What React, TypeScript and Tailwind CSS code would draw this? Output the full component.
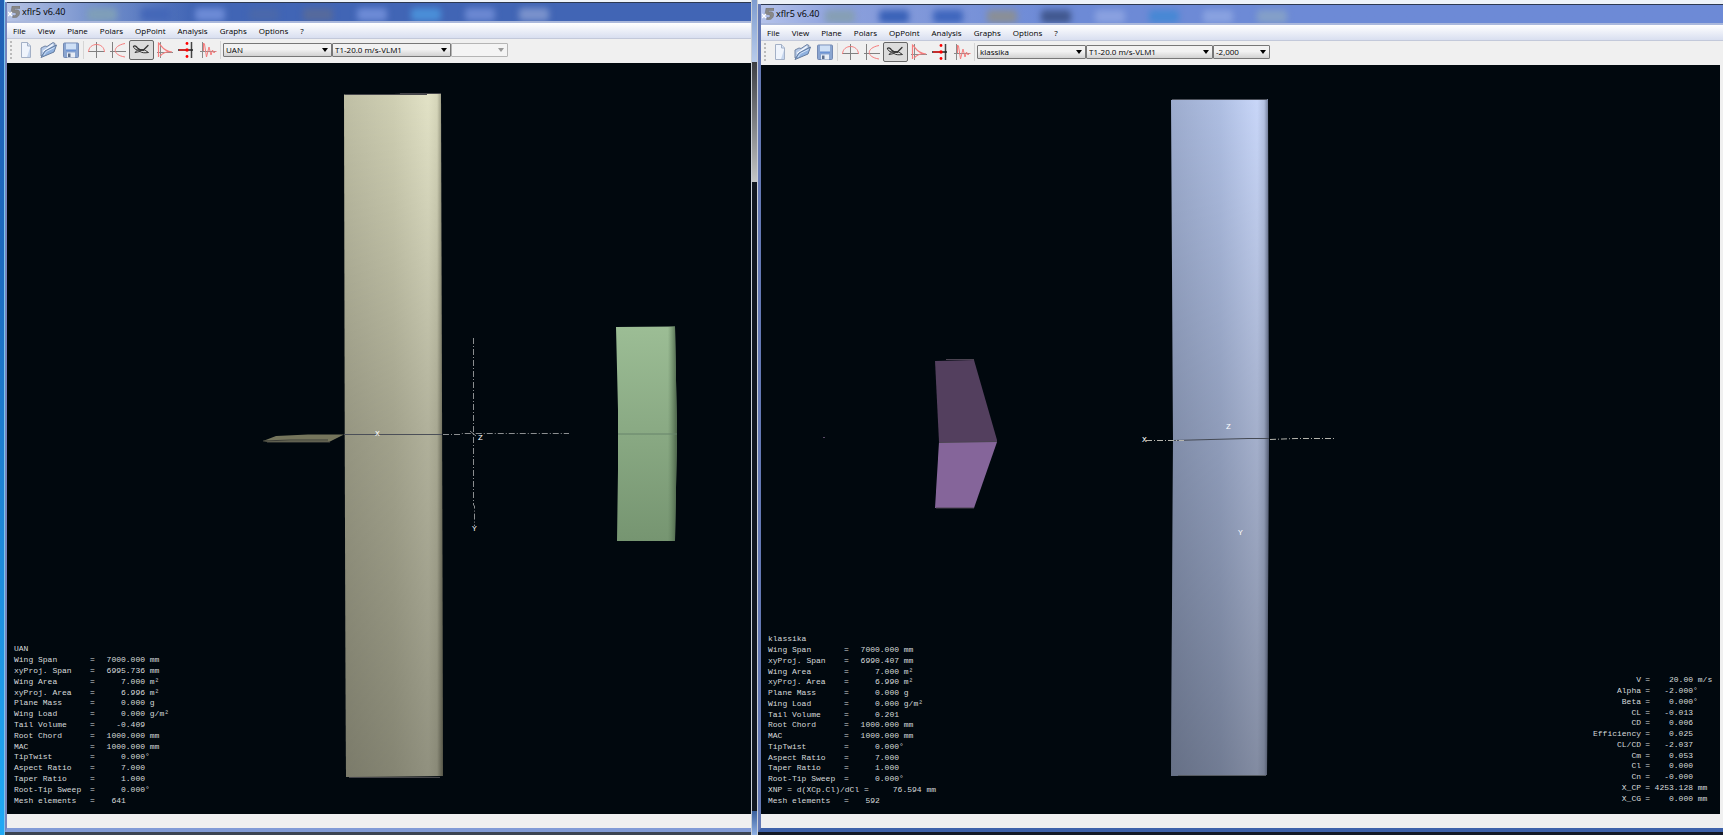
import { ReactNode } from "react";

type Row = { label: string; value?: string; unit?: string; wide?: boolean };

interface XflrWindowProps {
  id: string;
  plane: string;
  polar: string;
  opPoint: string;
  glass: string[];
  light?: boolean;
  children: ReactNode;
}

const MENUS = ["File", "View", "Plane", "Polars", "OpPoint", "Analysis", "Graphs", "Options", "?"];

// Desktop icons that shine through the glass title bars
const DARK_GLASS = ["bg-[#7f9fb8]", "bg-[#4467b8]", "bg-[#6d8bd6]", "bg-[#4a68ab]", "bg-[#566a9c]", "bg-[#6d8bd6]", "bg-[#4a8fd8]", "bg-[#6b88d2]", "bg-[#7a92cc]"];
const LIGHT_GLASS = ["bg-[#869fb4]", "bg-[#3a62b8]", "bg-[#3f66bd]", "bg-[#8a8f96]", "bg-[#41588f]", "bg-[#8aa1e0]", "bg-[#4788d4]", "bg-[#89a2e0]", "bg-[#84a0c8]"];

const UAN_ROWS: Row[] = [
  { label: "Wing Span", value: "7000.000", unit: " mm" },
  { label: "xyProj. Span", value: "6995.736", unit: " mm" },
  { label: "Wing Area", value: "7.000", unit: " m²" },
  { label: "xyProj. Area", value: "6.996", unit: " m²" },
  { label: "Plane Mass", value: "0.000", unit: " g" },
  { label: "Wing Load", value: "0.000", unit: " g/m²" },
  { label: "Tail Volume", value: "-0.409" },
  { label: "Root Chord", value: "1000.000", unit: " mm" },
  { label: "MAC", value: "1000.000", unit: " mm" },
  { label: "TipTwist", value: "0.000", unit: "°" },
  { label: "Aspect Ratio", value: "7.000" },
  { label: "Taper Ratio", value: "1.000" },
  { label: "Root-Tip Sweep", value: "0.000", unit: "°" },
  { label: "Mesh elements", value: "641    " },
];

const KLASSIKA_ROWS: Row[] = [
  { label: "Wing Span", value: "7000.000", unit: " mm" },
  { label: "xyProj. Span", value: "6990.407", unit: " mm" },
  { label: "Wing Area", value: "7.000", unit: " m²" },
  { label: "xyProj. Area", value: "6.990", unit: " m²" },
  { label: "Plane Mass", value: "0.000", unit: " g" },
  { label: "Wing Load", value: "0.000", unit: " g/m²" },
  { label: "Tail Volume", value: "0.201" },
  { label: "Root Chord", value: "1000.000", unit: " mm" },
  { label: "MAC", value: "1000.000", unit: " mm" },
  { label: "TipTwist", value: "0.000", unit: "°" },
  { label: "Aspect Ratio", value: "7.000" },
  { label: "Taper Ratio", value: "1.000" },
  { label: "Root-Tip Sweep", value: "0.000", unit: "°" },
  { label: "XNP = d(XCp.Cl)/dCl =     76.594 mm", wide: true },
  { label: "Mesh elements", value: "592    " },
];

const RESULT_ROWS: Row[] = [
  { label: "V", value: "20.00", unit: " m/s" },
  { label: "Alpha", value: "-2.000", unit: "°" },
  { label: "Beta", value: "0.000", unit: "°" },
  { label: "CL", value: "-0.013" },
  { label: "CD", value: "0.006" },
  { label: "Efficiency", value: "0.025" },
  { label: "CL/CD", value: "-2.037" },
  { label: "Cm", value: "0.053" },
  { label: "Cl", value: "0.000" },
  { label: "Cn", value: "-0.000" },
  { label: "X_CP", value: "4253.128", unit: " mm" },
  { label: "X_CG", value: "0.000", unit: " mm" },
];

// --- TOOLBAR ICONS ---
function NewIcon() {
  return (
    <svg viewBox="0 0 18 18" className="size-[18px]">
      <path d="M4.500 1.500h6l3 3.500v11.500h-9z" fill="#eff4fc" stroke="#a3b0c6" />
      <path d="M10.500 1.500v3.500h3" fill="#d5e2f5" stroke="#a3b0c6" />
      <path d="M10 16h3V7z" fill="#c6d6ee" />
    </svg>
  );
}

function OpenIcon() {
  return (
    <svg viewBox="0 0 18 18" className="size-[18px]">
      <path d="M1 15V7l4-2 2 .5 6-4 2 1v4z" fill="#b4c8e6" stroke="#7386a5" />
      <path d="M3 10.500l10-7" stroke="#f5f9ff" strokeWidth="1.500" />
      <path d="M1 16.500l4-6.500 11.500-6-2.500 7z" fill="#8fb1de" stroke="#647c9f" />
      <path d="M4 14l2.500-3.500 8-4" fill="none" stroke="#cfe0f6" />
    </svg>
  );
}

function SaveIcon() {
  return (
    <svg viewBox="0 0 18 18" className="size-[18px]">
      <rect x=".5" y="2" width="15" height="14.500" rx="1" fill="#8aa5d0" stroke="#748ab3" />
      <rect x="3" y="2.500" width="10" height="6" fill="#cfe0f6" />
      <path d="M3 9.500h10" stroke="#6b93d4" strokeWidth="1.500" />
      <rect x="4" y="11.500" width="8" height="5" fill="#e8edf5" />
      <rect x="5" y="12.500" width="2.500" height="3.500" fill="#5d6f8d" />
    </svg>
  );
}

function FoilIcon() {
  return (
    <svg viewBox="0 0 18 18" className="size-[18px]" fill="none">
      <path d="M9.500 1v16M1 10.500h16" stroke="#808080" />
      <path d="M1.500 11C2 1 17 1 17.500 11" stroke="#f57c7c" />
    </svg>
  );
}

function PolarIcon() {
  return (
    <svg viewBox="0 0 18 18" className="size-[18px]" fill="none">
      <path d="M3.500 1v16M1 10.500h16" stroke="#808080" />
      <path d="M16 2.500C3 5 3 14 16 16" stroke="#f57c7c" />
    </svg>
  );
}

function PlaneIcon() {
  return (
    <svg viewBox="0 0 18 18" className="size-[18px]" fill="none" stroke="#333" strokeLinecap="round">
      <path d="M1.500 5.500c1-1.500 3 0 4 1.500l3 2h3l4.500-4.500" strokeWidth="1.300" />
      <path d="M1.500 5.500c0 2 2 3 4 3.500l-2.500 2.500 5-1c2 1.500 5 1.500 8.500 1l-3-2" />
      <path d="M6 9h6" strokeWidth="1.500" />
    </svg>
  );
}

function OpPointIcon() {
  return (
    <svg viewBox="0 0 18 18" className="size-[18px]" fill="none">
      <path d="M4.500 1v16M1 11.500h16" stroke="#8a8a8a" />
      <path d="M2.500 16V2c3 2 4 8 13.500 9-5-1-8 0-12 4" stroke="#f57c7c" strokeWidth="1.200" />
    </svg>
  );
}

function RootLocusIcon() {
  return (
    <svg viewBox="0 0 18 18" className="size-[18px]" fill="none">
      <path d="M13.500 1v16" stroke="#444" strokeWidth="1.500" />
      <path d="M0 9h15" stroke="#222" strokeWidth="1.500" />
      <path d="M1 9h7" stroke="#e82020" strokeWidth="1.500" />
      <circle cx="9" cy="2.500" r="1.400" fill="#f00" />
      <circle cx="9" cy="9" r="1.700" fill="#f00" />
      <circle cx="9" cy="15.500" r="1.400" fill="#f00" />
    </svg>
  );
}

function ResponseIcon() {
  return (
    <svg viewBox="0 0 18 18" className="size-[18px]" fill="none">
      <path d="M2.500 1v16M0 10.500h16" stroke="#8a8a8a" />
      <path d="M3.500 10V2l1 1 2 13 2.500-10 2 8 1.500-5 1.500 3 1.500-2 1 1" stroke="#f57c7c" />
    </svg>
  );
}

const FILE_TOOLS = [
  { name: "New project", icon: <NewIcon /> },
  { name: "Open project", icon: <OpenIcon /> },
  { name: "Save project", icon: <SaveIcon /> },
];

const VIEW_TOOLS = [
  { name: "Operating point view", icon: <FoilIcon /> },
  { name: "Polar view", icon: <PolarIcon /> },
  { name: "3D view", icon: <PlaneIcon />, active: true },
  { name: "Cp view", icon: <OpPointIcon /> },
  { name: "Root locus view", icon: <RootLocusIcon /> },
  { name: "Time response view", icon: <ResponseIcon /> },
];

function Combo({ id, label, value, size, disabled }: { id: string; label: string; value: string; size: string; disabled?: boolean }) {
  return (
    <div className={`relative h-[14px] ${size}`}>
      <select
        id={id}
        aria-label={label}
        defaultValue={value}
        disabled={disabled}
        className="block h-full w-full appearance-none rounded-[1px] border border-[#777] bg-linear-to-b from-[#f2f2f2] from-45% to-[#d2d2d2] pl-[2px] text-[8px] leading-[12px] text-black disabled:border-[#b5b5b5] disabled:from-[#f4f4f4] disabled:to-[#f4f4f4]"
      >
        <option>{value}</option>
      </select>
      <svg viewBox="0 0 6 4" className={`pointer-events-none absolute top-[5px] right-[4px] h-1 w-1.5 ${disabled ? "text-[#999]" : "text-black"}`}>
        <path d="M0 0h6L3 4z" fill="currentColor" />
      </svg>
    </div>
  );
}

function DataTable({ title, rows, className }: { title: string; rows: Row[]; className: string }) {
  return (
    <table className={`absolute bottom-2 left-[7px] w-[200px] table-fixed font-['Liberation_Mono',monospace] text-[8px] leading-[10px] whitespace-pre text-[#d6dadb] ${className}`}>
      <colgroup>
        <col className="w-[76px]" />
        <col className="w-[10px]" />
        <col className="w-[45px]" />
        <col />
      </colgroup>
      <tbody>
        <tr>
          <th colSpan={4} className="p-0 text-left font-normal">{title}</th>
        </tr>
        {rows.map((row) =>
          row.wide ? (
            <tr key={row.label}>
              <td colSpan={4} className="p-0">{row.label}</td>
            </tr>
          ) : (
            <tr key={row.label}>
              <th className="p-0 text-left font-normal">{row.label}</th>
              <td className="p-0">=</td>
              <td className="p-0 text-right">{row.value}</td>
              <td className="p-0">{row.unit}</td>
            </tr>
          )
        )}
      </tbody>
    </table>
  );
}

function ResultTable() {
  return (
    <table className="absolute right-[7px] bottom-[10px] h-[129px] w-[130px] table-fixed font-['Liberation_Mono',monospace] text-[8px] leading-[10px] whitespace-pre text-[#d6dadb]">
      <colgroup>
        <col className="w-[58px]" />
        <col className="w-[9px]" />
        <col className="w-[43px]" />
        <col />
      </colgroup>
      <tbody>
        {RESULT_ROWS.map((row) => (
          <tr key={row.label}>
            <th className="p-0 text-right font-normal">{row.label}</th>
            <td className="p-0 text-right">=</td>
            <td className="p-0 text-right">{row.value}</td>
            <td className="p-0">{row.unit}</td>
          </tr>
        ))}
      </tbody>
    </table>
  );
}

function UanScene() {
  return (
    <svg viewBox="7 63 744 751" className="absolute inset-0 h-full w-full" role="img" aria-label="UAN plane, top view">
      <defs>
        <linearGradient id="uanWing" x1="0" y1="0" x2="1" y2="0">
          <stop offset="0" stopColor="#bfbfa5" />
          <stop offset="0.500" stopColor="#cfcfb3" />
          <stop offset="0.850" stopColor="#e2e2c6" />
          <stop offset="0.940" stopColor="#d6d6ba" />
          <stop offset="1" stopColor="#85856f" />
        </linearGradient>
        <linearGradient id="uanShade" x1="0" y1="0" x2="0" y2="1">
          <stop offset="0" stopColor="#000" stopOpacity="0" />
          <stop offset="0.500" stopColor="#000" stopOpacity="0.220" />
          <stop offset="1" stopColor="#000" stopOpacity="0.360" />
        </linearGradient>
        <linearGradient id="uanElev" x1="0" y1="0" x2="0" y2="1">
          <stop offset="0" stopColor="#9cbd95" />
          <stop offset="1" stopColor="#769571" />
        </linearGradient>
        <linearGradient id="uanElevEdge" x1="0" y1="0" x2="1" y2="0">
          <stop offset="0.850" stopColor="#5f7d5c" stopOpacity="0" />
          <stop offset="1" stopColor="#4a6248" />
        </linearGradient>
      </defs>
      <path d="M344 94.500L441 93.500L442 400L443 776L346 777L345 530Z" fill="url(#uanWing)" />
      <path d="M344 94.500L441 93.500L442 400L443 776L346 777L345 530Z" fill="url(#uanShade)" />
      <path d="M345 94.500H427M400 93.500H441M349 777.500H440" stroke="#45454a" />
      <path d="M344 434.500H442" stroke="#4b4f58" />
      <path d="M263 441L276 436L308 434.500H344L331 441L329 442L268 442Z" fill="#75755c" />
      <path d="M263 441L290 440H328" stroke="#3d3e38" fill="none" />
      <path d="M267 442H330" stroke="#4e4f47" />
      <path d="M616 327L675 326.500L677 434L675 541H617L618 470V410Z" fill="url(#uanElev)" />
      <path d="M616 327L675 326.500L677 434L675 541H617L618 470V410Z" fill="url(#uanElevEdge)" />
      <path d="M618 434H677" stroke="#66836a" />
      <g stroke="#8b8e90" strokeDasharray="6 2 1 2" fill="none">
        <path d="M443 434.500H460L462 433.500H569" />
        <path d="M473.500 338V505L474.500 506V526" />
      </g>
      <path d="M470 431l6 5" stroke="#8b8e90" />
      <g fill="#fff" fontFamily="'Liberation Mono', monospace" fontSize="8">
        <text x="375" y="436">X</text>
        <text x="478" y="440">Z</text>
        <text x="472" y="531">Y</text>
      </g>
    </svg>
  );
}

function KlassikaScene() {
  return (
    <svg viewBox="761 65 959 749" className="absolute inset-0 h-full w-full" role="img" aria-label="klassika plane, top view">
      <defs>
        <linearGradient id="klsWing" x1="0" y1="0" x2="1" y2="0">
          <stop offset="0" stopColor="#9dacce" />
          <stop offset="0.500" stopColor="#aebee2" />
          <stop offset="0.880" stopColor="#c8d6f8" />
          <stop offset="0.950" stopColor="#b4c2e2" />
          <stop offset="1" stopColor="#66718c" />
        </linearGradient>
        <linearGradient id="klsShade" x1="0" y1="0" x2="0" y2="1">
          <stop offset="0" stopColor="#000" stopOpacity="0" />
          <stop offset="0.500" stopColor="#000" stopOpacity="0.180" />
          <stop offset="1" stopColor="#000" stopOpacity="0.350" />
        </linearGradient>
      </defs>
      <path d="M1171 100L1268 99L1269 440L1267 775L1171 776L1173 440Z" fill="url(#klsWing)" />
      <path d="M1171 100L1268 99L1269 440L1267 775L1171 776L1173 440Z" fill="url(#klsShade)" />
      <path d="M1172 99.500H1267" stroke="#4c505a" />
      <path d="M1178 775.500H1266" stroke="#555a60" />
      <path d="M935 361L974 360L997 440V442H939Z" fill="#533f5e" />
      <path d="M939 442H997L974 508H935Z" fill="#85659a" />
      <path d="M939 442.500L997 441.500M936 508H974M946 359.500H974" stroke="#4c4452" />
      <path d="M1173 440.500L1248 438.500H1269" stroke="#454a54" fill="none" />
      <g stroke="#b5b5ad" strokeDasharray="6 2 1 2" fill="none">
        <path d="M1146 440.500H1184" />
        <path d="M1270 439.500L1296 438.500H1335" />
      </g>
      <rect x="823" y="437" width="2" height="1" fill="#5b4a68" />
      <g fill="#fff" fontFamily="'Liberation Mono', monospace" fontSize="8">
        <text x="1142" y="442">X</text>
        <text x="1226" y="429">Z</text>
        <text x="1238" y="535">Y</text>
      </g>
    </svg>
  );
}

function XflrWindow({ id, plane, polar, opPoint, glass, light, children }: XflrWindowProps) {
  return (
    <div className="flex h-full min-w-0 flex-col">
      {/* Title bar */}
      <header
        className={`flex h-[21px] shrink-0 items-center gap-[2px] overflow-hidden border-t border-b-2 border-t-[#2c3850] border-b-[#aab8dc] pl-px ${
          light
            ? "bg-linear-to-r from-[#b4c2ea] via-[#8ca0dc] via-8% to-[#6d8ad6] to-30%"
            : "bg-linear-to-r from-[#b6c3e4] via-[#7e98d0] via-10% to-[#4165b5] to-25%"
        }`}
      >
        <svg viewBox="0 0 12 12" className="size-3 shrink-0">
          <path d="M4 0h8v2.500H6.500v1.500c4-1 6 1 5 4-.8 3-4 4.500-7 3.500l.5-2c4 1 4.500-3.500 0-3H3z" fill="#888" stroke="#666" strokeWidth="0.400" />
          <path d="M0 6l4 4M4 6l-4 4" stroke="#fff" strokeWidth="1.300" />
        </svg>
        <h1 className="text-[9px] leading-[12px] text-black">xflr5 v6.40</h1>
        <div className={`flex gap-6 blur-[3px] ${light ? "ml-[4px]" : "ml-[20px]"}`}>
          {glass.map((tint, i) => (
            <span key={i} className={`mt-[5px] h-[13px] w-[30px] rounded-sm ${tint}`} />
          ))}
        </div>
      </header>

      {/* Menu */}
      <nav className="flex h-[16px] shrink-0 items-center gap-3 border-b border-[#c3c9da] bg-linear-to-b from-white to-[#d9dff0] pl-[6px] text-[8px] leading-[12px] text-black">
        {MENUS.map((menu) => (
          <button key={menu} type="button">{menu}</button>
        ))}
      </nav>

      {/* Toolbar */}
      <div className="flex h-[24px] shrink-0 items-center bg-[#f0f0f0] pb-[2px]">
        <span className="ml-[3px] h-[18px] w-0 border-l-2 border-dotted border-[#bbb]" />
        <div className="ml-[2px] flex w-[69px]">
          {FILE_TOOLS.map((tool) => (
            <button key={tool.name} type="button" aria-label={tool.name} className="flex h-[20px] flex-1 items-center justify-center">
              {tool.icon}
            </button>
          ))}
        </div>
        <span className="h-[18px] w-px bg-[#d5d5d5]" />
        <div className="ml-px flex w-[135px]">
          {VIEW_TOOLS.map((tool) => (
            <button
              key={tool.name}
              type="button"
              aria-label={tool.name}
              aria-pressed={!!tool.active}
              className={`flex h-[20px] flex-1 items-center justify-center ${tool.active ? "rounded-[2px] border border-[#666] bg-[#dcdcdc]" : ""}`}
            >
              {tool.icon}
            </button>
          ))}
        </div>
        <span className="mr-[2px] h-[18px] w-px bg-[#d5d5d5]" />
        <Combo id={`${id}-plane`} label="Plane" value={plane} size="w-[109px]" />
        <Combo id={`${id}-polar`} label="Polar" value={polar} size={light ? "w-[127px]" : "w-[119px]"} />
        <Combo id={`${id}-opp`} label="Operating point" value={opPoint} size="w-[57px]" disabled={!opPoint} />
      </div>

      {/* 3D view */}
      <main className={`flex min-h-0 flex-1 bg-[#f0f0f0] ${light ? "pr-[3px]" : ""}`}>
        <div className="relative flex-1 overflow-hidden bg-[#01080e]">{children}</div>
      </main>

      {/* Status bar */}
      <footer className="h-[14px] shrink-0 bg-[#f0f0f0]" />
    </div>
  );
}

export default function App() {
  return (
    <div className="flex h-screen min-h-[400px] overflow-hidden bg-[#101c30] font-['Open_Sans',sans-serif]">
      <div className="w-[5px] shrink-0 border-r border-[#7cc4ee] bg-linear-to-b from-[#2160b4] via-[#1c68bd] via-30% to-[#20a9f5]" />

      <div className="flex min-w-0 flex-[746] flex-col">
        <div className="h-[2px] shrink-0 bg-[#eef3f9]" />
        <div className="min-h-0 flex-1 border-b-4 border-l-2 border-b-[#829bd6] border-l-[#7484bd]">
          <XflrWindow id="uan" plane="UAN" polar="T1-20.0 m/s-VLM1" opPoint="" glass={DARK_GLASS}>
            <UanScene />
            <DataTable title="UAN" rows={UAN_ROWS} className="h-[162px]" />
          </XflrWindow>
        </div>
        <div className="h-[3px] shrink-0 bg-[#3c4452]" />
      </div>

      {/* Gap between the two windows */}
      <div className="flex w-[7px] shrink-0 flex-col border-x border-[#c9ced6] bg-[#10161f]">
        <div className="h-[62px] bg-linear-to-b from-[#7f9ccf] to-[#b8cbea]" />
        <div className="h-[120px] bg-linear-to-b from-[#3d3f45] to-[#c4c6c6]" />
        <div className="mt-auto h-[24px] bg-linear-to-b from-[#3a5f9c] to-[#8fb0e4]" />
      </div>

      <div className="flex min-w-0 flex-[965] flex-col">
        <div className="h-[4px] shrink-0 bg-[#edf2f8]" />
        <div className="min-h-0 flex-1 border-b-4 border-l-3 border-b-[#3f62aa] border-l-[#6478b4]">
          <XflrWindow id="klassika" plane="klassika" polar="T1-20.0 m/s-VLM1" opPoint="-2,000" glass={LIGHT_GLASS} light>
            <KlassikaScene />
            <DataTable title="klassika" rows={KLASSIKA_ROWS} className="h-[172px]" />
            <ResultTable />
          </XflrWindow>
        </div>
        <div className="h-[3px] shrink-0 bg-[#141a26]" />
      </div>
    </div>
  );
}
